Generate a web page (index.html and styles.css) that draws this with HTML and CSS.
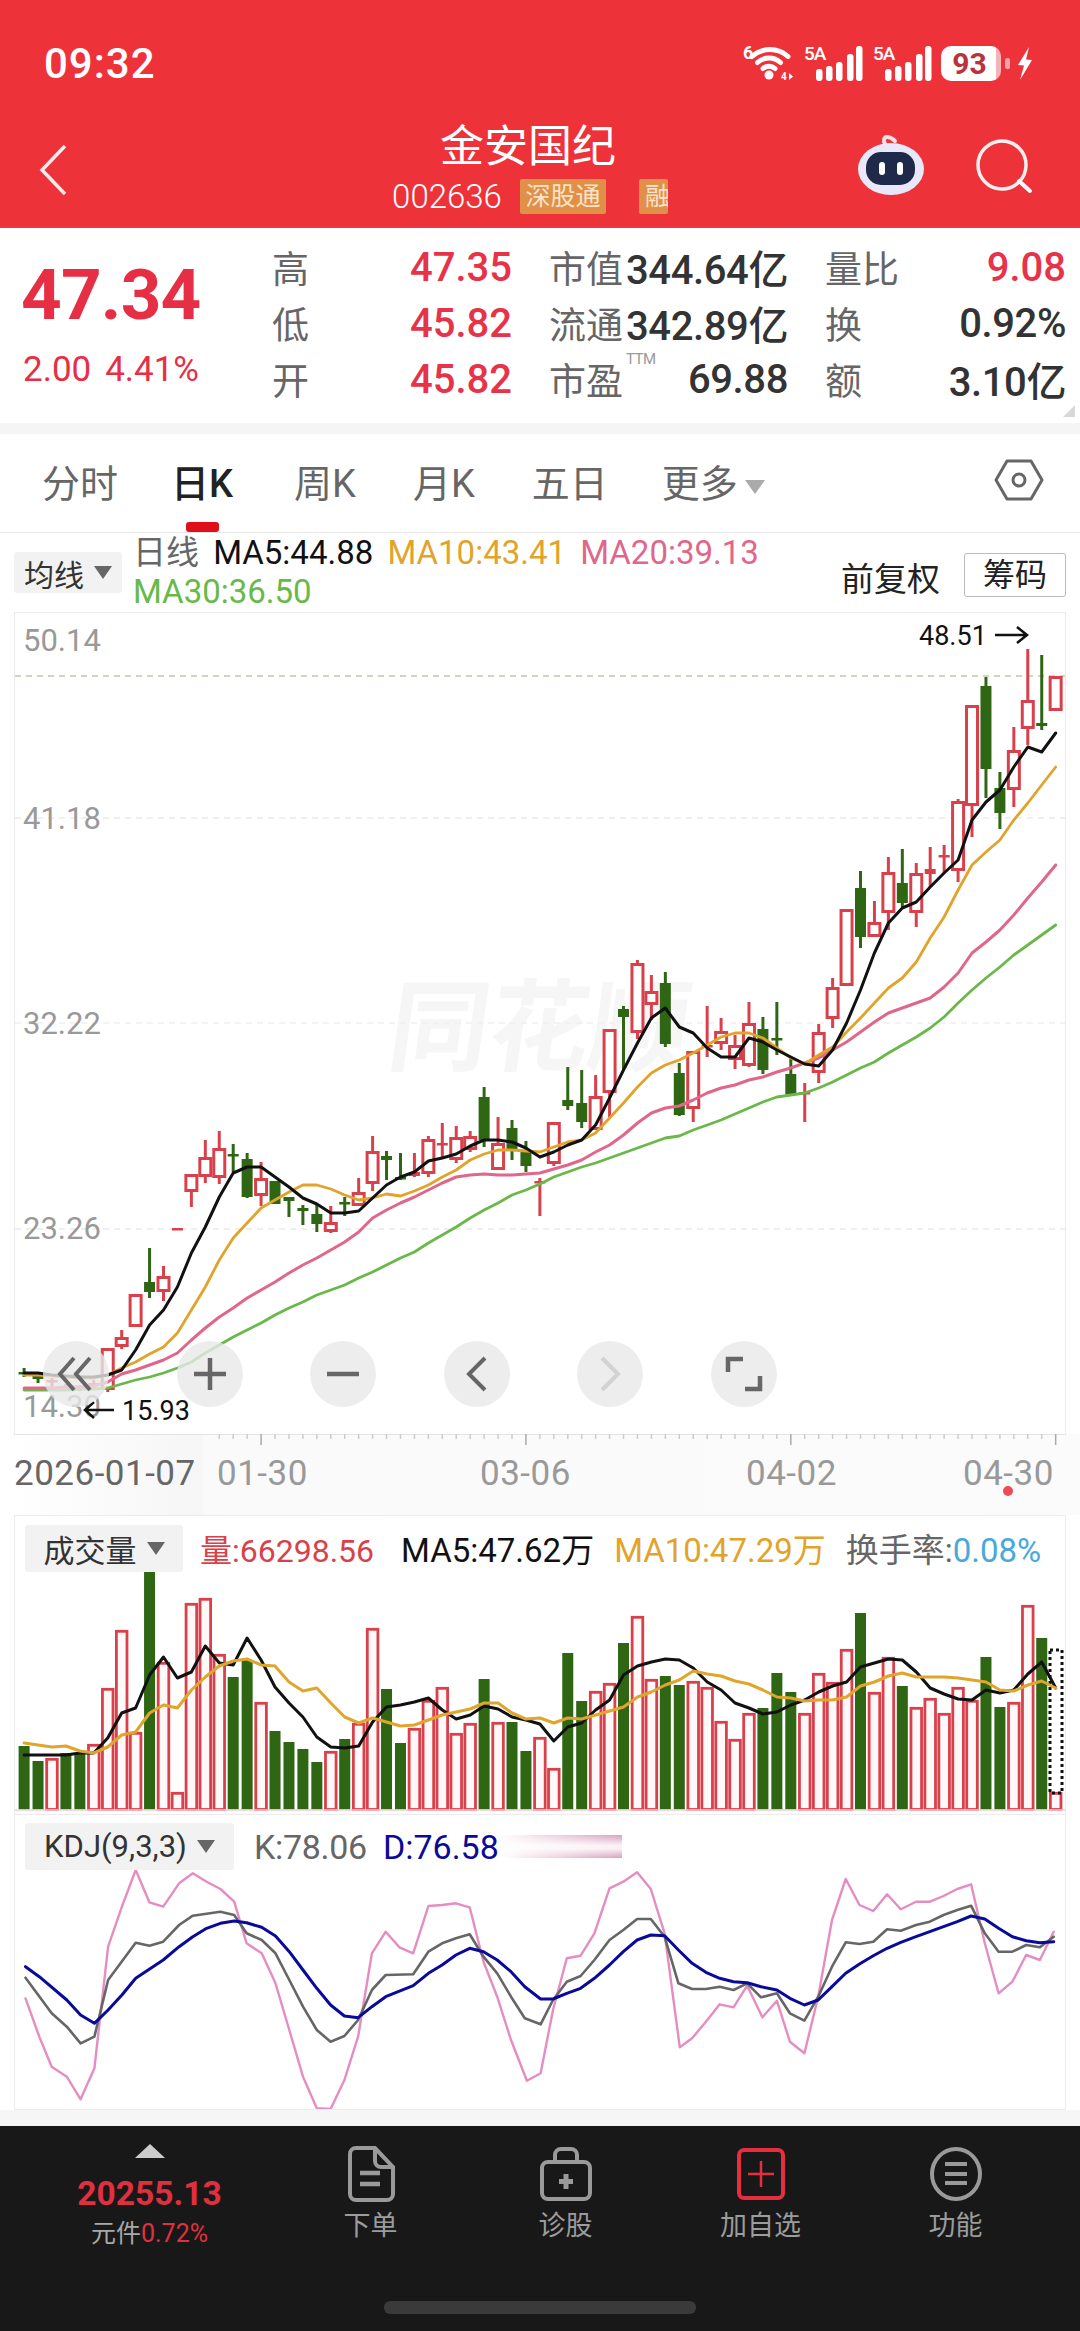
FILE: index.html
```html
<!DOCTYPE html>
<html lang="zh-CN">
<head>
  <meta charset="UTF-8" />
  <meta name="viewport" content="width=device-width, initial-scale=1.0" />
  <title>金安国纪 002636</title>
  <link rel="stylesheet" href="styles.css">
</head>
<body>
  <header class="topbar">
    <div class="status">
      <span class="clock">09:32</span>
      <div class="status-icons">
        <svg class="ic-wifi" width="56" height="40" viewBox="0 0 56 40">
          <text x="1" y="16" class="wifi-six">6</text>
          <g fill="none" stroke="#fff" stroke-width="5" stroke-linecap="round">
            <path d="M10 13.5A27 27 0 0 1 46 13.5"/>
            <path d="M15.5 19.5A17 17 0 0 1 38.5 19.5"/>
            <path d="M21 25.5A9 9 0 0 1 33 25.5"/>
          </g>
          <circle cx="27" cy="32" r="4.5" fill="#fff"/>
          <text x="39" y="37" class="wifi-four">4</text>
          <path d="M47 30l4 3.5-4 3.5z" fill="#fff"/>
        </svg>
        <svg class="ic-signal" width="63" height="42" viewBox="-3 -6 63 42">
          <text x="-2" y="15" class="signal-text">5A</text>
          <g fill="#fff">
            <rect x="10" y="24" width="6.5" height="12" rx="3"/>
            <rect x="20" y="21" width="6.5" height="15" rx="3"/>
            <rect x="30" y="17" width="6.5" height="19" rx="3"/>
            <rect x="41" y="9" width="6.5" height="27" rx="3"/>
            <rect x="50" y="1" width="6.5" height="35" rx="3"/>
          </g>
        </svg>
        <svg class="ic-signal" width="63" height="42" viewBox="-3 -6 63 42">
          <text x="-2" y="15" class="signal-text">5A</text>
          <g fill="#fff">
            <rect x="10" y="24" width="6.5" height="12" rx="3"/>
            <rect x="20" y="21" width="6.5" height="15" rx="3"/>
            <rect x="30" y="17" width="6.5" height="19" rx="3"/>
            <rect x="41" y="9" width="6.5" height="27" rx="3"/>
            <rect x="50" y="1" width="6.5" height="35" rx="3"/>
          </g>
        </svg>
        <div class="battery"><span>93</span></div>
        <span class="battery-tip"></span>
        <svg width="16" height="33" viewBox="0 0 16 33"><path d="M12 0L1 18l6 .5L3 33l12-20-6-.5z" fill="#fff"/></svg>
      </div>
    </div>
    <div class="nav">
      <svg class="nav-back" width="28" height="52" viewBox="0 0 28 52"><path d="M26 2L3 26l23 24" fill="none" stroke="#fff" stroke-width="3.5" stroke-opacity=".9"/></svg>
      <div class="nav-title">
        <div class="stock-name">金安国纪</div>
        <div class="stock-sub">
          <span class="stock-code">002636</span>
          <span class="badge">深股通</span>
          <span class="badge badge-cut"><span>融</span></span>
        </div>
      </div>
      <svg class="nav-robot" width="70" height="62" viewBox="0 0 70 62">
        <path d="M28 10C26 6 27 3 30 3s6 2 8 4" fill="none" stroke="#f5dfe6" stroke-width="4" stroke-linecap="round"/>
        <ellipse cx="34" cy="35" rx="33" ry="26" fill="#e9e8fa"/>
        <rect x="9" y="18" width="49" height="33" rx="15" fill="#1f2a4b"/>
        <rect x="22" y="28" width="6" height="13" rx="3" fill="#fff"/>
        <rect x="40" y="28" width="6" height="13" rx="3" fill="#fff"/>
      </svg>
      <svg class="nav-search" width="60" height="60" viewBox="0 0 60 60">
        <circle cx="27" cy="27" r="24" fill="none" stroke="#fff" stroke-width="3.5" stroke-opacity=".92"/>
        <path d="M44 43l11 10" fill="none" stroke="#fff" stroke-width="4" stroke-linecap="round"/>
      </svg>
    </div>
  </header>

  <section class="quote">
    <div class="price-box">
      <div class="price">47.34</div>
      <div class="price-change"><span>2.00</span><span>4.41%</span></div>
    </div>
    <div class="stats">
      <div class="stat"><span class="stat-label">高</span><span class="stat-up">47.35</span></div>
      <div class="stat"><span class="stat-label">市值</span><span class="stat-val">344.64亿</span></div>
      <div class="stat"><span class="stat-label">量比</span><span class="stat-up">9.08</span></div>
      <div class="stat"><span class="stat-label">低</span><span class="stat-up">45.82</span></div>
      <div class="stat"><span class="stat-label">流通</span><span class="stat-val">342.89亿</span></div>
      <div class="stat"><span class="stat-label">换</span><span class="stat-val">0.92%</span></div>
      <div class="stat"><span class="stat-label">开</span><span class="stat-up">45.82</span></div>
      <div class="stat"><span class="stat-label">市盈<sup class="ttm">TTM</sup></span><span class="stat-val">69.88</span></div>
      <div class="stat"><span class="stat-label">额</span><span class="stat-val">3.10亿</span></div>
    </div>
    <span class="corner-mark"></span>
  </section>

  <nav class="tabs">
    <span class="tab">分时</span>
    <span class="tab active">日K</span>
    <span class="tab">周K</span>
    <span class="tab">月K</span>
    <span class="tab">五日</span>
    <span class="tab tab-more">更多<i class="tab-arrow"></i></span>
    <svg class="tab-gear" width="50" height="44" viewBox="0 0 50 44">
      <path d="M13 3h24l11 19-11 19H13L2 22z" fill="none" stroke="#666" stroke-width="3" stroke-linejoin="round"/>
      <circle cx="25" cy="22" r="6" fill="none" stroke="#666" stroke-width="3"/>
    </svg>
  </nav>

  <div class="chart-head">
    <button class="pick pick-ma">均线<i class="pick-arrow"></i></button>
    <div class="legend">
      <span class="c-gray">日线</span>
      <span class="c-black">MA5:44.88</span>
      <span class="c-orange">MA10:43.41</span>
      <span class="c-pink">MA20:39.13</span>
      <span class="c-green">MA30:36.50</span>
    </div>
    <span class="adjust">前复权</span>
    <span class="chips">筹码</span>
  </div>

  <main class="charts">
    <div class="panel kline" id="klinePanel">
      <div class="zoom-btns">
        <span class="zoom-btn"><svg width="40" height="40" viewBox="0 0 40 40"><path d="M18 4L4 20l14 16M34 4L20 20l14 16" fill="none" stroke="#666" stroke-width="4"/></svg></span>
        <span class="zoom-btn"><svg width="40" height="40" viewBox="0 0 40 40"><path d="M4 20h32M20 4v32" fill="none" stroke="#666" stroke-width="4.5"/></svg></span>
        <span class="zoom-btn"><svg width="40" height="40" viewBox="0 0 40 40"><path d="M4 20h32" fill="none" stroke="#666" stroke-width="4.5"/></svg></span>
        <span class="zoom-btn"><svg width="40" height="40" viewBox="0 0 40 40"><path d="M28 4L12 20l16 16" fill="none" stroke="#666" stroke-width="4"/></svg></span>
        <span class="zoom-btn"><svg width="40" height="40" viewBox="0 0 40 40"><path d="M12 4l16 16-16 16" fill="none" stroke="#d2d2d2" stroke-width="4"/></svg></span>
        <span class="zoom-btn"><svg width="40" height="40" viewBox="0 0 40 40"><path d="M4 18V5h15M36 22v13H21" fill="none" stroke="#666" stroke-width="4.5"/></svg></span>
      </div>
    </div>
    <div class="axis" id="axisPanel"></div>

    <div class="panel volume" id="volPanel">
      <div class="panel-head">
        <button class="pick pick-vol">成交量<i class="pick-arrow"></i></button>
        <span class="c-red vol-now">量:66298.56</span>
        <span class="c-black">MA5:47.62万</span>
        <span class="c-orange">MA10:47.29万</span>
        <span class="c-gray">换手率:<span class="c-blue">0.08%</span></span>
      </div>
    </div>

    <div class="panel kdj" id="kdjPanel">
      <div class="panel-head kdj-head">
        <button class="pick pick-kdj">KDJ(9,3,3)<i class="pick-arrow"></i></button>
        <span class="c-gray">K:78.06</span>
        <span class="c-navy">D:76.58</span>
        <span class="smudge"></span>
      </div>
    </div>
  </main>

  <footer class="bottombar">
    <div class="index-box">
      <i class="index-arrow"></i>
      <div class="index-val">20255.13</div>
      <div class="index-sub">元件<span>0.72%</span></div>
    </div>
    <div class="action">
      <svg width="48" height="56" viewBox="0 0 48 56">
        <path d="M9 2h19l18 19v27a6 6 0 0 1-6 6H9a6 6 0 0 1-6-6V8a6 6 0 0 1 6-6z" fill="none" stroke="#9a9a9a" stroke-width="4"/>
        <path d="M28 3v12a6 6 0 0 0 6 6h11" fill="none" stroke="#9a9a9a" stroke-width="4"/>
        <path d="M13 27h20M13 38h20" stroke="#9a9a9a" stroke-width="4.5"/>
      </svg>
      <span>下单</span>
    </div>
    <div class="action">
      <svg width="54" height="56" viewBox="0 0 54 56">
        <path d="M16 16V9a6 6 0 0 1 6-6h10a6 6 0 0 1 6 6v7" fill="none" stroke="#9a9a9a" stroke-width="4"/>
        <rect x="3" y="16" width="48" height="37" rx="6" fill="none" stroke="#9a9a9a" stroke-width="4"/>
        <path d="M27 28v15M20 35.5h14" stroke="#9a9a9a" stroke-width="5"/>
      </svg>
      <span>诊股</span>
    </div>
    <div class="action">
      <svg width="52" height="56" viewBox="0 0 52 56">
        <rect x="4" y="4" width="44" height="48" rx="5" fill="none" stroke="#e62e3e" stroke-width="4"/>
        <path d="M26 15v26M13 28h26" stroke="#e62e3e" stroke-width="2.5"/>
      </svg>
      <span>加自选</span>
    </div>
    <div class="action">
      <svg width="54" height="56" viewBox="0 0 54 56">
        <ellipse cx="27" cy="28" rx="24" ry="25" fill="none" stroke="#9a9a9a" stroke-width="4"/>
        <path d="M16 18h22M16 28h22M16 37h22" stroke="#9a9a9a" stroke-width="4"/>
      </svg>
      <span>功能</span>
    </div>
    <div class="home-bar"></div>
  </footer>

  <script src="script.js"></script>
</body>
</html>
```

FILE: styles.css
```css
* { box-sizing: border-box; }
html, body { margin: 0; padding: 0; }
body { width: 1080px; height: 2331px; overflow: hidden; background: #fff; font-family: Roboto, "Noto Sans CJK SC", sans-serif; color: #333; }
i { font-style: normal; }
button { font: inherit; border: none; padding: 0; color: #333; }

/* top */
.topbar { height: 228px; background: #ee323a; border-bottom: 1px solid #d9454a; color: #fff; }
.status { height: 120px; display: flex; justify-content: space-between; align-items: center; padding: 6px 47px 0 44px; }
.clock { font-size: 42px; font-weight: 500; letter-spacing: 1px; }
.status-icons { display: flex; align-items: center; }
.ic-wifi { margin-right: 5px; }
.ic-signal { margin-right: 6px; margin-top: -6px; }
.wifi-six { font: 700 18px Roboto, sans-serif; fill: #fff; }
.wifi-four { font: 700 10px Roboto, sans-serif; fill: #fff; }
.signal-text { font: 500 19px Roboto, sans-serif; fill: #fff; letter-spacing: -1px; }
.battery { width: 60px; height: 35px; border-radius: 10px; background: linear-gradient(to right, #fff 92%, #f4b3b6 92%); color: #b9323c; font-weight: 700; font-size: 30px; line-height: 35px; text-align: center; }
.battery span { display: block; margin-right: 3px; }
.battery-tip { width: 5px; height: 11px; margin: 0 7px 0 4px; background: #f6a3a6; border-radius: 2px; }
.nav { height: 107px; display: flex; align-items: flex-start; }
.nav-back { margin: 24px 0 0 39px; }
.nav-title { width: 374px; margin-left: 274px; text-align: center; }
.stock-name { font-size: 44px; line-height: 50px; margin-top: 2px; }
.stock-sub { display: flex; justify-content: center; align-items: center; margin: 5px 0 0 4px; }
.stock-code { font-size: 33px; font-weight: 300; margin-right: 18px; }
.badge { width: 86px; height: 35px; background: #e09048; border-radius: 2px; color: #fbe3c6; font-size: 25px; line-height: 35px; text-align: center; }
.badge-cut { width: 29px; margin-left: 33px; overflow: hidden; text-align: left; padding-left: 6px; white-space: nowrap; }
.nav-robot { margin: 14px 0 0 142px; }
.nav-search { margin: 18px 0 0 48px; }

/* quote */
.quote { position: relative; display: flex; padding-top: 11px; border-bottom: 11px solid #f5f5f5; height: 206px; }
.price-box { width: 272px; padding-left: 21px; }
.price { font-size: 71px; font-weight: 700; color: #e62f45; line-height: 84px; margin-top: 14px; letter-spacing: -.8px; }
.price-change { width: 176px; display: flex; justify-content: space-between; font-size: 35px; color: #e62f45; margin: 15px 0 0 2px; line-height: 36px; }
.stats { display: grid; grid-template-columns: 240px 239px 241px; column-gap: 37px; grid-auto-rows: 56px; font-size: 37px; }
.stat { display: flex; justify-content: space-between; align-items: center; }
.stat-label { color: #666; position: relative; }
.stat-up { color: #e6334a; font-size: 40px; font-weight: 500; }
.stat-val { color: #333; font-size: 40px; font-weight: 500; letter-spacing: -.4px; }
.ttm { position: absolute; left: 77px; top: 0; font-size: 15px; line-height: 15px; color: #999; letter-spacing: -.5px; }
.corner-mark { position: absolute; right: 5px; bottom: 6px; border-left: 12px solid transparent; border-bottom: 12px solid #d8d8d8; }

/* tabs */
.tabs { height: 99px; display: flex; align-items: center; gap: 57px; padding: 0 36px 6px 42px; border-bottom: 1px solid #e8e8e8; font-size: 38px; color: #666; }
.tab { position: relative; white-space: nowrap; }
.tab.active { color: #222; font-weight: 500; margin: 0 4px 0 -4px; }
.tab.active::after { content: ""; position: absolute; left: 15px; bottom: -24px; width: 33px; height: 10px; border-radius: 3px; background: #e0101a; }
.tab-more { margin-left: -3px; }
.tab-arrow { display: inline-block; margin-left: 7px; vertical-align: 3px; border-left: 10px solid transparent; border-right: 10px solid transparent; border-top: 14px solid #aaa; }
.tab-gear { margin-left: auto; }

/* chart header */
.chart-head { height: 79px; display: flex; align-items: flex-start; padding-left: 14px; }
.pick { display: flex; align-items: center; justify-content: center; background: #f2f2f2; border-radius: 3px; }
.pick-arrow { margin-left: 10px; border-left: 9px solid transparent; border-right: 9px solid transparent; border-top: 13px solid #666; }
.pick-ma { width: 108px; height: 41px; margin-top: 19px; font-size: 30px; }
.legend { width: 640px; margin-left: 11px; font-size: 33px; line-height: 39px; }
.legend span { margin-right: 6px; }
.adjust { font-size: 33px; color: #222; margin: 20px 24px 0 auto; }
.chips { width: 102px; height: 44px; margin: 20px 14px 0 0; border: 1px solid #bbb; border-radius: 3px; font-size: 32px; line-height: 42px; text-align: center; color: #222; }
.c-gray { color: #666; }
.c-black { color: #111; }
.c-orange { color: #e2a32b; }
.c-pink { color: #e0668a; }
.c-green { color: #69b84a; }
.c-red { color: #d9414a; }
.c-blue { color: #4aa8dc; }
.c-navy { color: #0a0a9a; }

/* panels */
.charts { height: 1514px; padding: 0 14px; background: #fff; }
.panel { position: relative; border: 1px solid #ececec; }
.panel svg.plot { position: absolute; left: 0; top: 0; width: 100%; height: 100%; }
.kline { height: 822px; border-bottom: none; }
.axis { position: relative; height: 81px; margin: 0 -14px; background: linear-gradient(to right, #fff 14px, #f6f6f6 200px, #fafafa 205px, #fbfbfb); }
.axis svg.plot { position: absolute; left: 0; top: 0; width: 100%; height: 100%; }
.volume { height: 300px; }
.kdj { height: 295px; border-top: none; }
.panel-head { position: relative; display: flex; align-items: center; padding: 8px 0 0 10px; font-size: 33px; white-space: nowrap; }
.panel-head > span { margin-left: 20px; }
.panel-head > .vol-now { font-size: 32px; margin: 0 7px 0 17px; }
.pick-vol { width: 158px; height: 47px; font-size: 31px; }
.pick-kdj { width: 209px; height: 47px; font-size: 31px; }
.kdj-head { font-size: 34px; }
.kdj-head > span { margin-left: 20px; }
.kdj-head > .c-navy { margin-left: 16px; }
.kdj-head .c-gray { letter-spacing: -.3px; }
.smudge { width: 123px; height: 23px; margin-left: 0 !important; background: linear-gradient(to bottom, rgba(255,255,255,0), rgba(255,255,255,.85) 45%, rgba(255,255,255,.85) 60%, rgba(255,255,255,0)), linear-gradient(to right, #fff, #d8a0bc); }

.zoom-btns { position: absolute; z-index: 2; left: 28px; top: 728px; display: flex; gap: 67.6px; }
.zoom-btn { width: 66px; height: 66px; border-radius: 50%; background: rgba(232, 232, 232, .8); display: flex; align-items: center; justify-content: center; }
.axis-date { font: 35px Roboto, sans-serif; fill: #999; letter-spacing: .5px; }
.axis-date.first { fill: #666; }
.y-label { font: 31px Roboto, sans-serif; fill: #999; }
.mark-label { font: 27px Roboto, sans-serif; fill: #111; }
.watermark { font: 700 100px "Noto Sans CJK SC", sans-serif; fill: #f6f6f6; }

/* bottom */
.bottombar { position: relative; height: 205px; background: #181818; display: grid; grid-template-columns: 273px 195px 195px 195px 195px; color: #9c9c9c; font-size: 27px; text-align: center; }
.bottombar::before { content: ""; position: absolute; left: 0; right: 0; top: -16px; height: 16px; background: #f6f6f6; }
.index-box { padding: 18px 0 0 26px; }
.index-arrow { display: block; width: 0; margin: 0 auto; border-left: 15px solid transparent; border-right: 15px solid transparent; border-bottom: 14px solid #ccc; }
.index-val { font-size: 33.5px; font-weight: 700; color: #e03040; line-height: 40px; margin-top: 16px; }
.index-sub { font-size: 25px; color: #a8a8a8; line-height: 28px; margin-top: 6px; }
.index-sub span { color: #e03040; }
.action { padding-top: 20px; display: flex; flex-direction: column; align-items: center; }
.action span { line-height: 32px; margin-top: 8px; }
.home-bar { position: absolute; left: 384px; bottom: 17px; width: 312px; height: 13px; border-radius: 6px; background: #3a3a3a; }
```

FILE: script.js
```js
// k-line data, page pixels. [high, open/close top, open/close bottom, low, 1 = up day]
const candles = [
  [1368,1372,1373,1377,0],[1373,1376,1379,1383,0],[1378,1380,1382,1388,1],[1384,1386,1388,1390,1],[1385,1387,1389,1391,1],
  [1380,1383,1385,1388,1],[1348,1348,1390,1392,1],[1330,1337,1347,1349,1],[1294,1294,1327,1327,1],[1248,1282,1292,1298,0],
  [1266,1276,1292,1301,1],[1229,1228,1230,1229,1],[1174,1174,1192,1207,1],[1140,1157,1177,1183,1],[1131,1148,1178,1184,1],
  [1144,1154,1155,1172,0],[1153,1159,1197,1198,0],[1162,1178,1196,1206,1],[1181,1181,1204,1204,0],[1197,1197,1201,1217,0],
  [1205,1208,1211,1225,0],[1204,1214,1224,1232,0],[1206,1222,1232,1233,1],[1197,1202,1204,1216,0],[1178,1192,1206,1206,1],
  [1136,1151,1184,1191,1],[1151,1156,1160,1180,0],[1153,1177,1178,1180,0],[1153,1172,1176,1177,1],[1136,1139,1174,1177,1],
  [1123,1143,1145,1159,1],[1126,1137,1160,1163,1],[1131,1136,1150,1152,1],[1087,1097,1140,1147,0],[1117,1143,1170,1170,1],
  [1120,1128,1150,1160,0],[1141,1152,1166,1172,0],[1178,1181,1183,1216,1],[1122,1122,1164,1166,1],[1067,1100,1106,1110,0],
  [1070,1103,1122,1128,0],[1075,1096,1130,1130,1],[1029,1029,1093,1117,1],[1006,1009,1017,1070,0],[960,963,1033,1039,1],
  [975,991,1005,1020,1],[972,983,1044,1047,0],[1063,1073,1115,1116,0],[1051,1051,1109,1122,1],[1006,1045,1047,1057,1],
  [1018,1031,1044,1050,1],[1035,1045,1060,1069,1],[1002,1023,1066,1067,1],[1017,1029,1070,1074,0],[1002,1038,1040,1055,0],
  [1058,1074,1094,1095,0],[1083,1092,1093,1122,1],[1024,1032,1073,1083,1],[978,987,1019,1028,1],[909,909,986,986,1],
  [871,888,937,948,0],[901,922,937,937,1],[857,872,913,930,1],[849,883,903,907,0],[863,873,913,927,1],
  [847,869,874,887,1],[845,855,857,873,1],[799,801,871,882,1],[705,705,806,837,1],[677,686,769,798,0],
  [772,788,813,829,0],[727,750,790,807,1],[649,700,729,745,1],[655,723,726,730,0],[676,676,711,711,1]
];
const ma5 = [1373,1373,1375,1376,1377,1377,1375,1370,1350,1325,1310,1287,1253,1227,1197,1173,1167,1167,1177,1187,1198,1204,1213,1213,1211,1198,1185,1177,1172,1161,1158,1154,1146,1140,1140,1142,1148,1157,1152,1145,1140,1125,1098,1070,1043,1018,1008,1027,1033,1048,1057,1057,1038,1042,1050,1057,1064,1066,1050,1023,990,953,923,908,902,887,873,860,820,802,790,767,747,752,733];
const ma10 = [1375,1375,1376,1377,1378,1378,1375,1368,1362,1354,1347,1333,1310,1287,1260,1238,1223,1208,1200,1192,1185,1185,1189,1195,1200,1198,1194,1196,1191,1185,1177,1170,1160,1154,1150,1150,1151,1152,1147,1142,1140,1133,1118,1103,1087,1073,1065,1060,1053,1045,1037,1033,1033,1038,1048,1058,1064,1055,1047,1032,1018,1003,988,978,962,938,917,890,865,852,840,820,803,785,767];
const ma20 = [1388,1388,1388,1387,1387,1386,1382,1374,1370,1365,1360,1353,1340,1328,1317,1308,1298,1290,1282,1273,1265,1258,1250,1242,1232,1218,1210,1203,1197,1190,1183,1177,1175,1174,1175,1175,1174,1173,1169,1165,1160,1152,1145,1135,1123,1113,1108,1106,1100,1093,1088,1085,1080,1077,1072,1068,1063,1058,1050,1042,1032,1022,1013,1008,1003,998,987,973,953,942,930,915,898,882,865];
const ma30 = [1390,1390,1390,1390,1389,1389,1388,1384,1380,1377,1373,1368,1362,1353,1345,1337,1330,1323,1315,1308,1302,1295,1290,1285,1278,1272,1265,1258,1252,1243,1235,1227,1218,1210,1203,1195,1190,1184,1177,1172,1167,1163,1158,1153,1148,1143,1138,1136,1130,1125,1120,1114,1108,1102,1097,1095,1093,1088,1082,1075,1068,1062,1053,1045,1037,1028,1017,1003,990,978,967,955,945,935,925];

// volume: [top of bar, 1 = up day]
const volume = [
  [1746,0],[1761,0],[1758,1],[1753,0],[1753,0],[1744,1],[1688,1],[1630,1],[1732,1],[1571,0],[1662,1],[1792,1],[1603,1],[1598,1],[1654,1],
  [1677,0],[1660,0],[1702,1],[1731,0],[1742,0],[1749,0],[1762,0],[1751,1],[1739,0],[1723,1],[1628,1],[1689,0],[1743,0],[1728,1],[1700,1],
  [1687,1],[1733,1],[1723,1],[1679,0],[1722,1],[1722,0],[1751,0],[1737,1],[1768,1],[1653,0],[1701,0],[1691,1],[1683,1],[1643,0],[1616,1],
  [1679,1],[1676,0],[1685,0],[1681,1],[1687,1],[1721,1],[1739,1],[1713,1],[1708,0],[1673,0],[1692,0],[1713,1],[1673,1],[1682,1],[1649,1],
  [1613,0],[1692,1],[1657,1],[1686,0],[1707,1],[1698,1],[1713,1],[1687,1],[1700,1],[1657,0],[1707,0],[1702,1],[1605,1],[1638,0],[1792,1]
];
const volMa5 = [1755,1755,1755,1755,1753,1753,1738,1713,1708,1675,1657,1678,1672,1646,1663,1665,1638,1660,1687,1703,1717,1737,1747,1748,1746,1722,1707,1705,1702,1698,1710,1719,1715,1706,1709,1717,1720,1724,1741,1727,1723,1710,1700,1675,1666,1662,1659,1660,1668,1682,1690,1703,1708,1714,1712,1705,1700,1692,1686,1682,1667,1663,1659,1660,1672,1688,1694,1699,1700,1690,1693,1690,1674,1662,1688];
const volMa10 = [1743,1745,1747,1746,1751,1753,1747,1735,1732,1713,1705,1708,1690,1677,1666,1661,1659,1665,1666,1682,1691,1688,1703,1717,1723,1718,1722,1726,1725,1720,1715,1712,1709,1703,1703,1713,1719,1718,1723,1718,1719,1715,1711,1707,1697,1692,1685,1680,1671,1674,1676,1681,1684,1690,1697,1698,1701,1700,1700,1697,1686,1682,1676,1673,1677,1677,1677,1678,1680,1682,1690,1691,1685,1681,1688];

// kdj was traced off a stretched picture, so x is divided by 1.452 and y by 3 below
const kdjK = [[37,503],[75,610],[97,650],[117,700],[137,680],[157,510],[197,398],[217,407],[237,395],[260,345],[280,317],[320,305],[340,315],[358,370],[380,390],[400,430],[420,510],[440,590],[460,660],[480,695],[500,678],[520,630],[540,540],[560,495],[600,493],[622,425],[642,400],[662,385],[682,373],[702,440],[722,490],[742,560],[762,625],[785,643],[803,570],[823,515],[843,498],[863,450],[885,390],[905,360],[925,327],[945,327],[965,380],[985,520],[1005,537],[1025,537],[1045,530],[1065,540],[1085,520],[1105,562],[1128,550],[1147,610],[1168,632],[1188,560],[1208,470],[1228,397],[1248,402],[1268,395],[1288,358],[1308,362],[1330,345],[1350,335],[1370,315],[1390,300],[1410,287],[1430,370],[1450,425],[1470,425],[1490,405],[1510,412],[1530,380]];
const kdjD = [[37,470],[57,500],[97,570],[117,615],[137,640],[157,600],[177,555],[197,505],[237,450],[260,410],[280,380],[300,355],[320,340],[340,333],[358,338],[380,352],[400,378],[420,425],[440,480],[460,535],[480,585],[500,618],[520,623],[540,590],[560,560],[600,527],[622,490],[642,465],[662,435],[682,415],[702,425],[722,450],[742,485],[762,530],[785,567],[803,567],[823,550],[843,535],[863,505],[885,465],[905,425],[925,390],[945,375],[965,377],[985,420],[1005,460],[1025,487],[1045,505],[1065,515],[1085,518],[1105,530],[1128,540],[1147,565],[1168,585],[1188,570],[1208,530],[1228,490],[1248,462],[1268,437],[1288,415],[1308,397],[1330,380],[1350,365],[1370,350],[1390,335],[1410,318],[1430,327],[1450,355],[1470,380],[1490,392],[1510,398],[1530,395]];
const kdjJ = [[37,565],[57,680],[75,770],[97,800],[117,868],[137,775],[157,410],[177,290],[197,180],[217,277],[237,290],[260,220],[280,190],[300,215],[320,237],[340,275],[358,400],[380,430],[400,520],[420,660],[440,800],[460,895],[480,897],[500,810],[520,680],[540,430],[560,365],[580,412],[600,430],[622,288],[642,285],[662,280],[682,292],[702,455],[722,560],[742,690],[765,812],[785,790],[803,600],[823,445],[843,437],[863,370],[885,235],[905,215],[925,187],[945,237],[965,370],[987,712],[1005,685],[1025,635],[1045,583],[1065,592],[1085,527],[1107,622],[1128,572],[1147,695],[1168,730],[1188,560],[1208,330],[1228,207],[1248,285],[1268,303],[1288,253],[1308,298],[1330,275],[1350,275],[1370,258],[1390,237],[1410,223],[1430,400],[1450,550],[1470,515],[1490,435],[1510,450],[1530,365]];

const RED = '#d8414b';
const GREEN = '#2e6614';
const barX = i => 24.1 + i * 13.94;

// svg whose viewBox is the page itself, so everything below is in page pixels
function plotFor(el) {
  const r = el.getBoundingClientRect();
  const x = r.left + el.clientLeft, y = r.top + el.clientTop;
  const svg = document.createElementNS('http://www.w3.org/2000/svg', 'svg');
  svg.setAttribute('class', 'plot');
  svg.setAttribute('viewBox', `${x} ${y} ${el.clientWidth} ${el.clientHeight}`);
  el.prepend(svg);
  return svg;
}

function polyline(points, color, width) {
  const d = points.map(p => p.map(n => n.toFixed(1)).join(',')).join(' ');
  return `<polyline points="${d}" fill="none" stroke="${color}" stroke-width="${width}" stroke-linejoin="round" stroke-linecap="round"/>`;
}
const maLine = (ys, color, width) => polyline(ys.map((y, i) => [barX(i), y]), color, width);
const dash = (y, color) => `<line x1="15" x2="1065" y1="${y}" y2="${y}" stroke="${color}" stroke-width="1.5" stroke-dasharray="6 5"/>`;

function candleSvg([hi, top, bot, lo, up], i) {
  const x = barX(i);
  const color = up ? RED : GREEN;
  let s = `<line x1="${x}" x2="${x}" y1="${hi}" y2="${lo}" stroke="${color}" stroke-width="3"/>`;
  if (up && bot - top > 5) {
    s += `<rect x="${x - 5.5}" y="${top + 1.5}" width="11" height="${bot - top - 3}" fill="#fff" stroke="${color}" stroke-width="3"/>`;
  } else {
    s += `<rect x="${x - 5.5}" y="${top}" width="11" height="${Math.max(bot - top, 2.5)}" fill="${color}"/>`;
  }
  return s;
}

function drawKline() {
  const labels = [['50.14', 651], ['41.18', 829], ['32.22', 1034], ['23.26', 1239], ['14.30', 1417]];
  plotFor(document.getElementById('klinePanel')).innerHTML =
    `<text class="watermark" x="0" y="0" transform="translate(385 1063) skewX(-8)">同花顺</text>` +
    dash(676, '#c9c3a8') + dash(818, '#eaeaea') + dash(1023, '#f0f0f0') + dash(1229, '#eaeaea') +
    labels.map(([t, y]) => `<text class="y-label" x="23" y="${y}">${t}</text>`).join('') +
    candles.map(candleSvg).join('') +
    maLine(ma30, '#6ab84a', 2.8) + maLine(ma20, '#e0668a', 3) + maLine(ma10, '#e2a32b', 2.8) + maLine(ma5, '#111', 3) +
    `<text class="mark-label" x="919" y="645">48.51</text>` +
    `<path d="M995 635h32m-10-8l10 8-10 8" fill="none" stroke="#111" stroke-width="2.5"/>` +
    `<text class="mark-label" x="122" y="1420">15.93</text>` +
    `<path d="M114 1410H86m8-8l-9 8 9 8" fill="none" stroke="#111" stroke-width="2.5"/>`;
}

function drawAxis() {
  let ticks = `<line x1="14" x2="1066" y1="0.5" y2="0.5" stroke="#e4e4e4"/>`;
  for (let i = 14; i < 75; i++) {
    const big = [17, 36, 55, 74].includes(i);
    ticks += `<line x1="${barX(i)}" x2="${barX(i)}" y1="0" y2="${big ? 11 : 5}" stroke="${big ? '#aaa' : '#ccc'}" stroke-width="1.5"/>`;
  }
  const dates = [['2026-01-07', 14, 'first'], ['01-30', 217, ''], ['03-06', 480, ''], ['04-02', 746, ''], ['04-30', 963, '']];
  const labels = dates.map(([t, x, c]) => `<text class="axis-date ${c}" x="${x}" y="51">${t}</text>`).join('');
  const svg = plotFor(document.getElementById('axisPanel'));
  svg.setAttribute('viewBox', `0 0 1080 81`);
  svg.innerHTML = ticks + labels + `<circle cx="1008" cy="57" r="5" fill="#ee4a58"/>`;
}

function drawVolume() {
  const base = 1809.5;
  const bars = volume.map(([top, up], i) => {
    const x = barX(i);
    if (up) return `<rect x="${x - 5.3}" y="${top + 1.3}" width="10.6" height="${base - top - 1.3}" fill="#fff8f8" stroke="${RED}" stroke-width="2.8"/>`;
    return `<rect x="${x - 5.5}" y="${top}" width="11" height="${base - top}" fill="${GREEN}"/>`;
  }).join('');
  plotFor(document.getElementById('volPanel')).innerHTML =
    bars +
    `<line x1="15" x2="1065" y1="1810" y2="1810" stroke="#f3cdd6" stroke-width="1.5"/>` +
    `<rect x="1050" y="1650" width="12" height="143" fill="none" stroke="#111" stroke-width="3" stroke-dasharray="3 3"/>` +
    maLine(volMa5, '#111', 3) + maLine(volMa10, '#e0a52c', 3);
}

function drawKdj() {
  const toPage = ([x, y]) => [x / 1.452, 1810 + y / 3];
  plotFor(document.getElementById('kdjPanel')).innerHTML =
    polyline(kdjJ.map(toPage), '#e58dc0', 2.4) +
    polyline(kdjK.map(toPage), '#666', 2.6) +
    polyline(kdjD.map(toPage), '#0a0a9a', 3);
}

drawKline();
drawAxis();
drawVolume();
drawKdj();
```
